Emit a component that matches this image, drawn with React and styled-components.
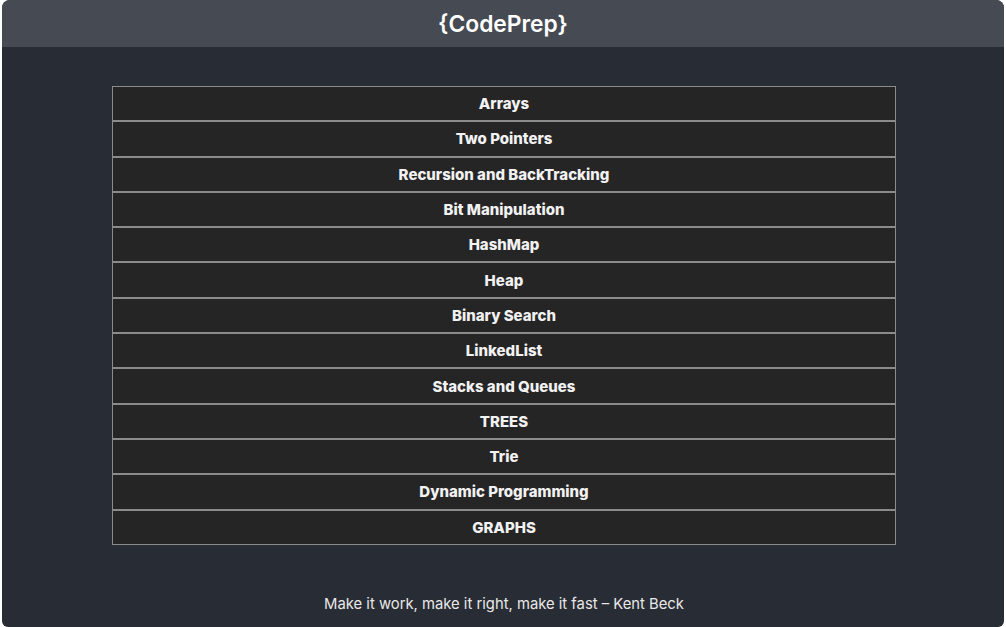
import React from 'react';
import styled, { createGlobalStyle } from 'styled-components';

const topics = [
    'Arrays',
    'Two Pointers',
    'Recursion and BackTracking',
    'Bit Manipulation',
    'HashMap',
    'Heap',
    'Binary Search',
    'LinkedList',
    'Stacks and Queues',
    'TREES',
    'Trie',
    'Dynamic Programming',
    'GRAPHS'
];

const App = () => {
    return (
        <>
            <GlobalStyle />
            <Frame>
                <Header>
                    <Title>{'{CodePrep}'}</Title>
                </Header>
                <Main>
                    <TopicList>
                        {topics.map((topic) => (
                            <TopicRow key={topic}>{topic}</TopicRow>
                        ))}
                    </TopicList>
                    <Quote>Make it work, make it right, make it fast – Kent Beck</Quote>
                </Main>
            </Frame>
        </>
    );
};

// Style components
const GlobalStyle = createGlobalStyle`
    html, body {
        margin: 0;
        padding: 0;
        background: #ffffff;
        font-family: Inter, "Noto Sans", sans-serif;
    }
`;

const Frame = styled.div`
    margin: 0 2px;
    height: 627px;
    border-radius: 8px 8px 6px 6px;
    overflow: hidden;
    background: #282c34;
    display: flex;
    flex-direction: column;
`;

const Header = styled.header`
    height: 47px;
    background: #454a53;
    display: flex;
    align-items: center;
    justify-content: center;
    flex-shrink: 0;
`;

const Title = styled.h1`
    margin: 0;
    font-size: 22.8px;
    font-weight: 600;
    color: #ffffff;
`;

const Main = styled.main`
    flex: 1;
    display: flex;
    flex-direction: column;
    align-items: center;
    padding-top: 39px;
`;

const TopicList = styled.div`
    width: 784px;
    margin-left: 2px;
    display: flex;
    flex-direction: column;
`;

const TopicRow = styled.div`
    height: 35.3px;
    box-sizing: border-box;
    border: 1px solid #8b8b8b;
    background: #252526;
    color: #f2f2f2;
    font-size: 15px;
    font-weight: 800;
    display: flex;
    align-items: center;
    justify-content: center;
`;

const Quote = styled.p`
    margin: 50px 0 0;
    font-size: 14.8px;
    color: #e8e8e8;
    margin-left: 2px;
`;

export default App;
